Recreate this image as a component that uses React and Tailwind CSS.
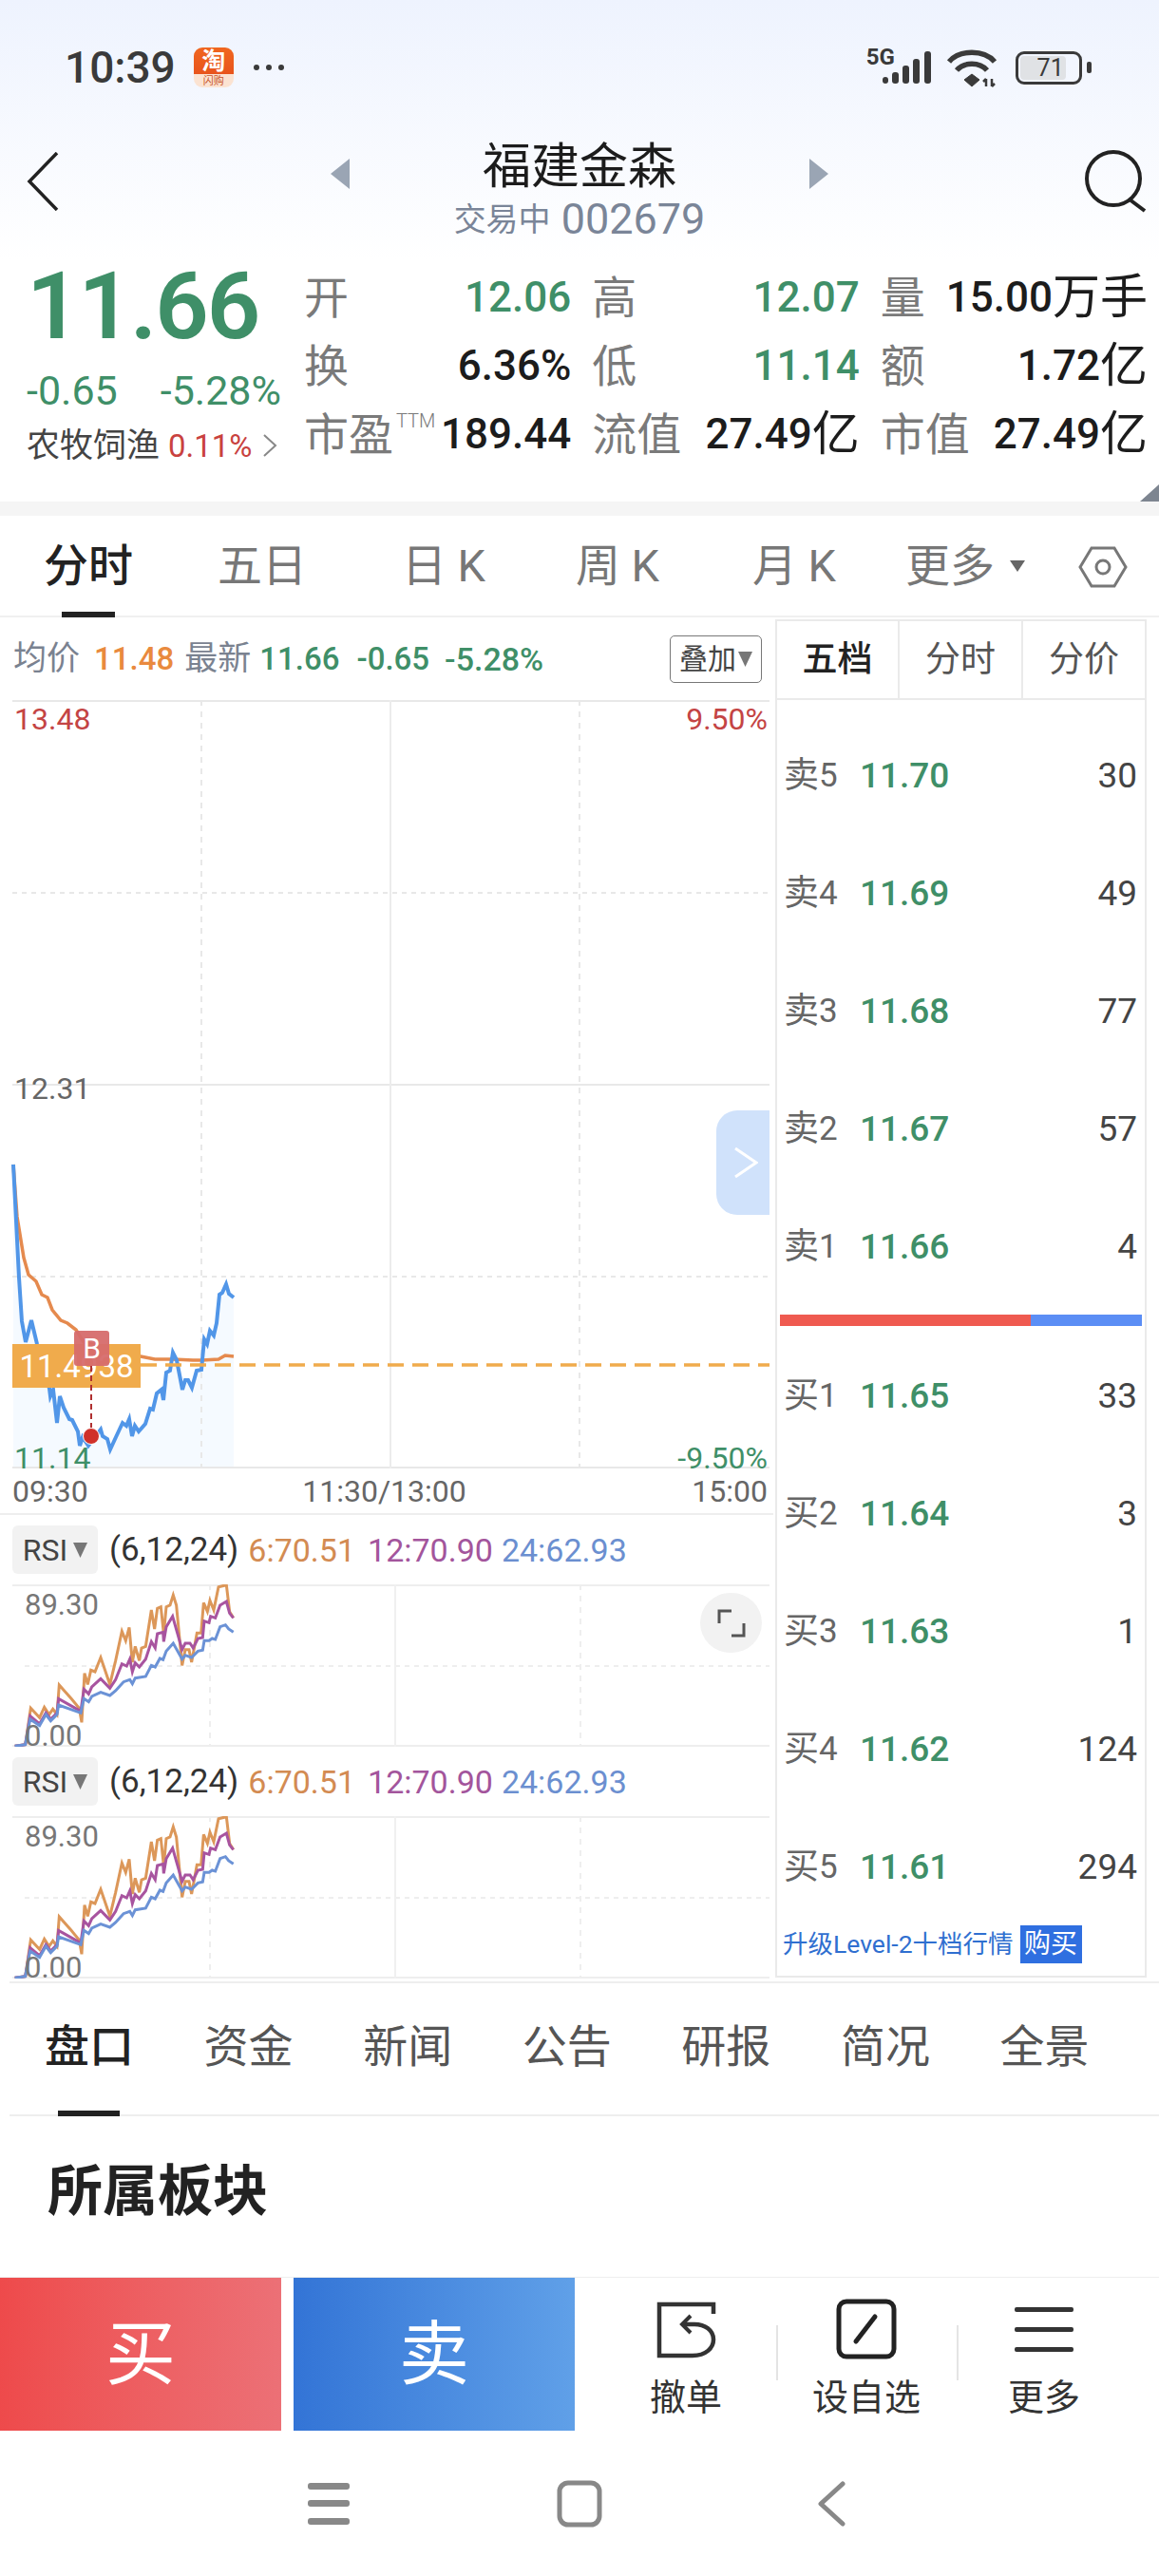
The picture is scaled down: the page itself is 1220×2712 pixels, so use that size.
import React from "react";

const GREEN = "text-[#3f8f68]";

// price line, page coordinates
const PRICE = [[14,1226],[20,1345],[23,1391],[27,1413],[33,1390],[39,1415],[46,1440],[52,1462],[53,1470],[56,1463],[60,1498],[63,1470],[67,1482],[73,1494],[76,1495],[82,1507],[84,1522],[87,1513],[93,1522],[106,1505],[108,1512],[113,1515],[116,1526],[122,1513],[129,1498],[133,1501],[136,1494],[139,1512],[142,1501],[146,1507],[153,1499],[158,1483],[161,1484],[165,1467],[170,1463],[172,1474],[175,1445],[179,1443],[182,1424],[186,1432],[192,1463],[195,1453],[198,1453],[202,1461],[207,1443],[212,1442],[215,1410],[218,1415],[221,1401],[225,1406],[228,1393],[231,1363],[234,1361],[238,1352],[241,1362],[246,1366]];
const AVG = [[14,1226],[18,1281],[25,1324],[30,1342],[38,1349],[44,1363],[50,1366],[55,1379],[64,1390],[71,1393],[80,1400],[88,1413],[130,1424],[148,1428],[163,1431],[182,1431],[203,1432],[213,1432],[230,1431],[237,1427],[246,1428]];

// rsi lines, read at 3x from the first rsi chart, origin (0,1640)
const RSI_BLUE = [[47,595],[80,590],[95,510],[125,530],[145,495],[160,515],[180,495],[185,465],[255,490],[265,445],[280,455],[290,438],[318,425],[347,435],[365,420],[390,392],[410,385],[418,398],[427,380],[460,375],[478,340],[490,345],[505,318],[515,322],[525,295],[547,270],[575,320],[585,308],[605,315],[625,295],[640,292],[645,262],[660,262],[670,255],[680,258],[695,218],[712,212],[722,225],[737,235]];
const RSI_PURPLE = [[47,595],[80,590],[95,500],[125,525],[145,490],[160,510],[180,490],[185,445],[255,485],[265,415],[280,430],[290,408],[318,382],[347,412],[365,385],[385,335],[400,342],[410,320],[418,360],[427,332],[440,345],[460,320],[478,265],[490,285],[497,240],[515,235],[517,265],[525,218],[545,185],[575,290],[585,270],[600,270],[610,285],[625,255],[640,252],[645,200],[660,205],[665,185],[680,190],[695,150],[715,138],[725,175],[737,190]];
const RSI_ORANGE = [[47,595],[80,590],[97,475],[125,505],[140,472],[155,495],[167,478],[180,495],[187,402],[225,445],[250,475],[258,520],[267,365],[277,400],[287,355],[300,360],[318,315],[330,350],[347,400],[365,325],[385,232],[397,262],[408,220],[418,330],[427,280],[440,325],[447,285],[460,280],[478,165],[488,225],[497,160],[508,155],[517,240],[525,155],[537,150],[547,118],[557,150],[575,340],[585,290],[597,290],[605,330],[622,238],[635,238],[643,142],[655,170],[663,135],[675,165],[690,92],[715,86],[725,170],[737,190]];

const toPoints = (list) => list.map(([x, y]) => `${x},${y}`).join(" ");
const toRsiPoints = (list) => list.map(([x, y]) => `${x / 3},${1640 + y / 3}`).join(" ");

const STATS = [
  { label: "开", value: "12.06", color: GREEN },
  { label: "高", value: "12.07", color: GREEN },
  { label: "量", value: "15.00", unit: "万手", color: "text-[#1c1c1c]" },
  { label: "换", value: "6.36%", color: "text-[#1c1c1c]" },
  { label: "低", value: "11.14", color: GREEN },
  { label: "额", value: "1.72", unit: "亿", color: "text-[#1c1c1c]" },
  { label: "市盈", ttm: true, value: "189.44", color: "text-[#1c1c1c]" },
  { label: "流值", value: "27.49", unit: "亿", color: "text-[#1c1c1c]" },
  { label: "市值", value: "27.49", unit: "亿", color: "text-[#1c1c1c]" },
];

const CHART_TABS = [
  { name: "分时", w: "w-[186px]", active: true },
  { name: "五日", w: "w-[180px]" },
  { name: "日 K", w: "w-[202px]" },
  { name: "周 K", w: "w-[164px]" },
  { name: "月 K", w: "w-[208px]" },
];

const SELLS = [
  ["卖", "5", "11.70", "30"],
  ["卖", "4", "11.69", "49"],
  ["卖", "3", "11.68", "77"],
  ["卖", "2", "11.67", "57"],
  ["卖", "1", "11.66", "4"],
];
const BUYS = [
  ["买", "1", "11.65", "33"],
  ["买", "2", "11.64", "3"],
  ["买", "3", "11.63", "1"],
  ["买", "4", "11.62", "124"],
  ["买", "5", "11.61", "294"],
];

const INFO_TABS = ["资金", "新闻", "公告", "研报", "简况", "全景"];

function StatusBar() {
  return (
    <div className="flex h-[142px] items-center">
      <span className="ml-[68px] text-[46px] leading-none font-medium text-[#3a3a3a]">10:39</span>
      <div className="ml-[19px] flex h-[42px] w-[42px] flex-col overflow-hidden rounded-[9px]">
        <div className="flex h-[28px] items-center justify-center bg-linear-to-b from-[#f0661f] to-[#e8541c] text-[25px] leading-none font-bold text-white">淘</div>
        <div className="flex h-[14px] items-center justify-center bg-[#fbe3d2] text-[11px] leading-none text-[#c9552a]">闪购</div>
      </div>
      <div className="ml-[21px] flex gap-[7px]">
        <span className="h-[6px] w-[6px] rounded-full bg-[#3a3a3a]" />
        <span className="h-[6px] w-[6px] rounded-full bg-[#3a3a3a]" />
        <span className="h-[6px] w-[6px] rounded-full bg-[#3a3a3a]" />
      </div>

      <div className="relative ml-[613px] h-[40px] w-[70px]">
        <span className="absolute top-[-3px] left-0 text-[24px] leading-none font-bold text-[#3a3a3a]">5G</span>
        <svg className="absolute top-0 left-0" width="72" height="40" viewBox="0 0 72 40" fill="#3a3a3a">
          <rect x="17" y="30" width="6" height="7" rx="3" />
          <rect x="27" y="25" width="7" height="12" rx="3" />
          <rect x="38" y="18" width="7" height="19" rx="3" />
          <rect x="49" y="11" width="7" height="26" rx="3" />
          <rect x="61" y="3" width="7" height="34" rx="3" />
        </svg>
      </div>
      <svg className="ml-[14px]" width="56" height="42" viewBox="0 0 56 42" fill="none" stroke="#3a3a3a">
        <path d="M3 15 C14 2 40 2 51 15" strokeWidth="5.5" />
        <path d="M11 24 C19 15 35 15 43 24" strokeWidth="5.5" />
        <path d="M19 34 L27 28 L35 34 L27 41 Z" fill="#3a3a3a" strokeWidth="1" />
        <path d="M42 41 V33 M39 36 L42 33 M48 33 V41 M51 38 L48 41" strokeWidth="2.5" />
      </svg>
      <div className="ml-[17px] flex h-[35px] w-[70px] items-center rounded-[9px] border-[3px] border-[#3a3a3a] p-[2px]">
        <div className="flex h-full w-[48px] items-center justify-end rounded-[4px] bg-[#e0e2e5] pr-[2px] text-[25px] leading-none text-[#3a3a3a]">71</div>
      </div>
      <span className="ml-[5px] h-[12px] w-[5px] rounded-[2px] bg-[#3a3a3a]" />
    </div>
  );
}

function Header() {
  return (
    <div className="grid h-[123px] grid-cols-[1fr_auto_1fr] px-[12px]">
      <svg className="mt-[18px] ml-[16px]" width="36" height="62" viewBox="0 0 36 62" fill="none" stroke="#222" strokeWidth="3.5">
        <path d="M32 1 L3 31 L32 61" />
      </svg>
      <div className="flex w-[524px] justify-between">
        <svg className="mt-[25px]" width="20" height="32" viewBox="0 0 20 32" fill="#9aa5b4"><path d="M20 0 V32 L0 16 Z" /></svg>
        <div className="flex flex-col items-center">
          <span className="mt-[7px] text-[51px] leading-[54px] text-[#1c1c1c]">福建金森</span>
          <span className="mt-[5px] flex items-center gap-[11px] leading-none text-[#7a8598]">
            <span className="text-[34px]">交易中</span>
            <span className="text-[45px]">002679</span>
          </span>
        </div>
        <svg className="mt-[25px]" width="20" height="32" viewBox="0 0 20 32" fill="#9aa5b4"><path d="M0 0 V32 L20 16 Z" /></svg>
      </div>
      <svg className="mt-[16px] ml-auto" width="66" height="66" viewBox="0 0 66 66" fill="none" stroke="#222" strokeWidth="4">
        <ellipse cx="30" cy="30" rx="28" ry="28" />
        <path d="M47 52 L63 64" />
      </svg>
    </div>
  );
}

function Quote() {
  return (
    <div className="relative flex h-[263px]">
      <div className="w-[320px] pl-[28px]">
        <div className={`flex h-[114px] items-center text-[99px] leading-none font-semibold tracking-[-2px] ${GREEN}`}>11.66</div>
        <div className={`flex h-[64px] w-[268px] items-center justify-between text-[43px] leading-none ${GREEN}`}>
          <span>-0.65</span>
          <span>-5.28%</span>
        </div>
        <div className="flex h-[52px] items-center leading-none">
          <span className="text-[35px] text-[#444]">农牧饲渔</span>
          <span className="ml-[9px] text-[33px] text-[#c9423f]">0.11%</span>
          <svg className="ml-[10px]" width="16" height="26" viewBox="0 0 16 26" fill="none" stroke="#888" strokeWidth="2"><path d="M2 2 L14 13 L2 24" /></svg>
        </div>
      </div>
      <div className="mt-[12px] grid h-[216px] w-[888px] grid-cols-3 grid-rows-3 gap-x-[22px]">
        {STATS.map((item) => (
          <div key={item.label} className="flex items-center justify-between">
            <span className="relative text-[47px] leading-none text-[#7a7a7a]">
              {item.label}
              {item.ttm && <span className="absolute top-[-1px] left-[97px] text-[20px] leading-none font-light">TTM</span>}
            </span>
            <span className={`flex items-center text-[44px] leading-none font-medium ${item.color}`}>
              {item.value}
              {item.unit && <span className="text-[50px] font-normal">{item.unit}</span>}
            </span>
          </div>
        ))}
      </div>
      <svg className="absolute right-0 bottom-0" width="20" height="18" viewBox="0 0 20 18" fill="#7d8590"><path d="M20 0 V18 H0 Z" /></svg>
    </div>
  );
}

function ChartTabs() {
  return (
    <div className="flex h-[107px] border-b-2 border-[#f0f0f0] text-[#777]">
      {CHART_TABS.map((tab) => (
        <div key={tab.name} className={`relative flex items-center justify-center text-[47px] leading-none ${tab.w} ${tab.active ? "font-medium text-[#222]" : ""}`}>
          {tab.name}
          {tab.active && <span className="absolute bottom-[-2px] left-[65px] h-[6px] w-[56px] bg-[#222]" />}
        </div>
      ))}
      <div className="ml-[13px] flex w-[152px] items-center gap-[16px] text-[47px] leading-none">
        更多
        <svg width="16" height="12" viewBox="0 0 16 12" fill="#666"><path d="M0 0 H16 L8 12 Z" /></svg>
      </div>
      <svg className="mt-[32px] ml-[30px]" width="52" height="44" viewBox="0 0 52 44" fill="none" stroke="#777" strokeWidth="3">
        <path d="M14 2 H38 L50 22 L38 42 H14 L2 22 Z" />
        <circle cx="26" cy="22" r="7" />
      </svg>
    </div>
  );
}

function Caret({ className }) {
  return (
    <svg className={className} width="15" height="16" viewBox="0 0 15 16" fill="#777"><path d="M0 0 H15 L7.5 16 Z" /></svg>
  );
}

function InfoRow() {
  return (
    <div className="flex h-[87px] items-center pl-[14px] text-[33px] leading-none">
      <span className="text-[35px] text-[#7a8290]">均价</span>
      <span className="ml-[15px] font-medium text-[#e98a3e]">11.48</span>
      <span className="ml-[11px] text-[35px] text-[#7a8290]">最新</span>
      <span className={`ml-[9px] font-medium ${GREEN}`}>11.66</span>
      <span className={`ml-[18px] font-medium ${GREEN}`}>-0.65</span>
      <span className={`ml-[16px] text-[34px] font-medium ${GREEN}`}>-5.28%</span>
      <div className="ml-auto mr-[12px] flex h-[50px] w-[97px] items-center justify-center gap-[2px] rounded-[5px] border border-[#777] text-[30px] text-[#444]">
        叠加
        <Caret />
      </div>
    </div>
  );
}

function PriceChart() {
  return (
    <div className="relative h-[809px] w-[814px] text-[32px] leading-none">
      <svg className="block" width="814" height="809" viewBox="0 737 814 809">
        <polygon points={`${toPoints(PRICE)} 246,1546 14,1546`} fill="#f5faff" />
        <line x1="13" y1="738" x2="810" y2="738" stroke="#e8e8e8" strokeWidth="2" />
        <line x1="13" y1="1142" x2="810" y2="1142" stroke="#e8e8e8" strokeWidth="2" />
        <line x1="13" y1="1545" x2="810" y2="1545" stroke="#e8e8e8" strokeWidth="2" />
        <line x1="13" y1="940" x2="810" y2="940" stroke="#e8e8e8" strokeWidth="2" strokeDasharray="5 5" />
        <line x1="13" y1="1344" x2="810" y2="1344" stroke="#e8e8e8" strokeWidth="2" strokeDasharray="5 5" />
        <line x1="212" y1="737" x2="212" y2="1546" stroke="#e8e8e8" strokeWidth="2" strokeDasharray="6 6" />
        <line x1="411" y1="737" x2="411" y2="1546" stroke="#ececec" strokeWidth="2" />
        <line x1="610" y1="737" x2="610" y2="1546" stroke="#e8e8e8" strokeWidth="2" strokeDasharray="6 6" />
        <polyline points={toPoints(AVG)} fill="none" stroke="#e58a4e" strokeWidth="3.5" />
        <polyline points={toPoints(PRICE)} fill="none" stroke="#5196e8" strokeWidth="4" />
        <line x1="148" y1="1437" x2="810" y2="1437" stroke="#f0ab4c" strokeWidth="3.5" strokeDasharray="17 9" />
      </svg>

      <span className="absolute top-[4px] left-[15px] text-[#c44444]">13.48</span>
      <span className="absolute top-[4px] right-[6px] text-[#c44444]">9.50%</span>
      <span className="absolute top-[393px] left-[15px] text-[#666]">12.31</span>
      <span className={`absolute top-[782px] left-[15px] ${GREEN}`}>11.14</span>
      <span className={`absolute top-[782px] right-[6px] ${GREEN}`}>-9.50%</span>

      <div className="absolute top-[678px] left-[13px] flex h-[46px] w-[135px] items-center justify-center bg-[#f0ab4c] text-[33px] text-white">11.4938</div>
      <div className="absolute top-[664px] left-[78px] flex h-[37px] w-[37px] items-center justify-center rounded-[3px] bg-[#d66c6c]/95 text-[30px] text-white">B</div>
      <span className="absolute top-[701px] left-[95px] h-[66px] border-l-2 border-dashed border-[#b03030]" />
      <span className="absolute top-[766px] left-[87px] h-[18px] w-[18px] rounded-full border border-white bg-[#d0312a]" />

      <div className="absolute top-[432px] left-[754px] flex h-[110px] w-[56px] items-center justify-end rounded-l-[22px] bg-[#d0e2fb] pr-[12px]">
        <svg width="26" height="34" viewBox="0 0 26 34" fill="none" stroke="#fff" strokeWidth="3"><path d="M2 2 L24 17 L2 32" /></svg>
      </div>
    </div>
  );
}

function RsiRow() {
  return (
    <div className="flex h-[73px] items-center text-[34px] leading-none">
      <div className="ml-[13px] flex h-[51px] w-[90px] items-center justify-center gap-[6px] rounded-[6px] bg-[#f2f2f2] text-[32px] text-[#444]">
        RSI
        <Caret />
      </div>
      <span className="ml-[12px] text-[35px] text-[#333]">(6,12,24)</span>
      <span className="ml-[10px] text-[#d38b52]">6:70.51</span>
      <span className="ml-[13px] text-[#a3559c]">12:70.90</span>
      <span className="ml-[9px] text-[#6b8fd0]">24:62.93</span>
    </div>
  );
}

function RsiChart({ expand }) {
  return (
    <div className="relative h-[171px] w-[814px] text-[31px] leading-none text-[#777]">
      <svg className="block" width="814" height="171" viewBox="0 1668 814 171">
        <line x1="13" y1="1669" x2="810" y2="1669" stroke="#eeeeee" strokeWidth="2" />
        <line x1="13" y1="1838" x2="810" y2="1838" stroke="#eeeeee" strokeWidth="2" />
        <line x1="26" y1="1754" x2="810" y2="1754" stroke="#eeeeee" strokeWidth="2" strokeDasharray="5 5" />
        <line x1="221" y1="1668" x2="221" y2="1839" stroke="#eeeeee" strokeWidth="2" strokeDasharray="6 6" />
        <line x1="416" y1="1668" x2="416" y2="1839" stroke="#f0f0f0" strokeWidth="2" />
        <line x1="611" y1="1668" x2="611" y2="1839" stroke="#eeeeee" strokeWidth="2" strokeDasharray="6 6" />
        <polyline points={toRsiPoints(RSI_ORANGE)} fill="none" stroke="#dc9759" strokeWidth="3" />
        <polyline points={toRsiPoints(RSI_PURPLE)} fill="none" stroke="#a8549f" strokeWidth="3" />
        <polyline points={toRsiPoints(RSI_BLUE)} fill="none" stroke="#6b92d6" strokeWidth="3" />
      </svg>
      <span className="absolute top-[6px] left-[26px]">89.30</span>
      <span className="absolute top-[144px] left-[26px]">0.00</span>
      {expand && (
        <div className="absolute top-[9px] left-[737px] flex h-[63px] w-[65px] items-center justify-center rounded-full bg-[#f2f2f2]">
          <svg width="30" height="30" viewBox="0 0 30 30" fill="none" stroke="#555" strokeWidth="3">
            <path d="M2 15 V2 H15 M28 15 V28 H15" />
          </svg>
        </div>
      )}
    </div>
  );
}

function OrderRow({ row }) {
  return (
    <div className="flex h-[124px] items-center pr-[8px] pl-[7px] leading-none">
      <span className="flex w-[80px] items-center text-[#666]">
        <span className="text-[37px]">{row[0]}</span>
        <span className="text-[35px]">{row[1]}</span>
      </span>
      <span className={`text-[37px] font-medium ${GREEN}`}>{row[2]}</span>
      <span className="ml-auto text-[37px] text-[#444]">{row[3]}</span>
    </div>
  );
}

function OrderBook() {
  return (
    <div className="mt-[2px] ml-[2px] h-[1430px] w-[391px] border-2 border-[#eaeaea]">
      <div className="flex h-[83px] items-center border-b-2 border-[#eaeaea] text-[37px] leading-none text-[#555]">
        <div className="flex h-full w-[129px] items-center justify-center border-r-2 border-[#eaeaea] font-medium text-[#222]">五档</div>
        <div className="flex h-full w-[130px] items-center justify-center border-r-2 border-[#eaeaea]">分时</div>
        <div className="flex h-full flex-1 items-center justify-center">分价</div>
      </div>
      <div className="pt-[17px]">
        {SELLS.map((row) => <OrderRow key={row[1]} row={row} />)}
      </div>
      <div className="mx-[3px] mt-[10px] flex h-[12px]">
        <div className="w-[264px] bg-[#ef5a50]" />
        <div className="flex-1 bg-[#5b8ef5]" />
      </div>
      <div className="mt-[11px]">
        {BUYS.map((row) => <OrderRow key={row[1]} row={row} />)}
      </div>
      <div className="flex h-[40px] items-center pl-[6px]">
        <span className="text-[26.5px] leading-none whitespace-nowrap text-[#2f6fd0]">升级Level-2十档行情</span>
        <span className="ml-[7px] flex h-[40px] w-[65px] items-center justify-center bg-[#2f6fe0] text-[28px] leading-none text-white">购买</span>
      </div>
    </div>
  );
}

function InfoTabs() {
  return (
    <div className="relative ml-[10px] flex h-[142px] items-start border-y-2 border-[#eeeeee] pt-[44px] pl-[37px] text-[47px] leading-[46px] text-[#555]">
      <span className="w-[168px] font-medium text-[#222]">盘口</span>
      {INFO_TABS.map((tab) => (
        <span key={tab} className="w-[168px]">{tab}</span>
      ))}
      <span className="absolute bottom-[-2px] left-[51px] h-[6px] w-[65px] bg-[#222]" />
    </div>
  );
}

function ActionBar() {
  return (
    <div className="flex h-[162px] border-t border-[#eeeeee]">
      <div className="flex w-[296px] items-center justify-center bg-linear-to-r from-[#ee4a4b] to-[#ec7076] text-[74px] leading-none text-white">买</div>
      <div className="ml-[13px] flex w-[296px] items-center justify-center bg-linear-to-r from-[#3374d6] to-[#60a0e8] text-[74px] leading-none text-white">卖</div>
      <div className="ml-[42px] flex">
        <div className="flex w-[150px] flex-col items-center pt-[22px] text-[38px] leading-[40px] text-[#333]">
          <svg width="66" height="64" viewBox="0 0 66 64" fill="none" stroke="#333" strokeWidth="4.5">
            <path d="M62 16 V6 H5 V60 H40 C54 60 62 52 62 43 C62 33 53 27 42 27 H30" />
            <path d="M38 18 L29 27 L38 36" strokeWidth="4" />
          </svg>
          <span className="mt-[20px]">撤单</span>
        </div>
        <span className="mt-[50px] mr-[18px] ml-[20px] h-[58px] w-[2px] bg-[#e4e4e4]" />
        <div className="flex w-[150px] flex-col items-center pt-[22px] text-[38px] leading-[40px] text-[#333]">
          <svg width="66" height="64" viewBox="0 0 66 64" fill="none" stroke="#222" strokeWidth="5">
            <rect x="4" y="3" width="58" height="58" rx="8" />
            <path d="M22 45 L42 19" strokeLinecap="round" />
          </svg>
          <span className="mt-[20px]">设自选</span>
        </div>
        <span className="mt-[50px] mr-[15px] ml-[20px] h-[58px] w-[2px] bg-[#e4e4e4]" />
        <div className="flex w-[150px] flex-col items-center pt-[22px] text-[38px] leading-[40px] text-[#333]">
          <svg width="66" height="64" viewBox="0 0 66 64" fill="#333">
            <rect x="2" y="9" width="62" height="5" rx="2" />
            <rect x="2" y="30" width="62" height="5" rx="2" />
            <rect x="2" y="51" width="62" height="5" rx="2" />
          </svg>
          <span className="mt-[20px]">更多</span>
        </div>
      </div>
    </div>
  );
}

function NavBar() {
  return (
    <div className="flex h-[153px] items-center">
      <svg className="ml-[323px]" width="46" height="44" viewBox="0 0 46 44" fill="#888">
        <rect x="1" y="0" width="44" height="7" rx="3" />
        <rect x="1" y="18" width="44" height="7" rx="3" />
        <rect x="1" y="37" width="44" height="7" rx="3" />
      </svg>
      <svg className="ml-[217px]" width="48" height="50" viewBox="0 0 48 50" fill="none" stroke="#888" strokeWidth="5">
        <rect x="3" y="3" width="42" height="44" rx="9" />
      </svg>
      <svg className="ml-[226px]" width="30" height="48" viewBox="0 0 30 48" fill="none" stroke="#888" strokeWidth="5" strokeLinecap="round" strokeLinejoin="round">
        <path d="M27 3 L4 24 L27 45" />
      </svg>
    </div>
  );
}

export default function App() {
  return (
    <div className="flex h-[2712px] w-[1220px] flex-col overflow-hidden bg-white font-['Roboto','Noto_Sans_CJK_SC',sans-serif]">
      <div className="bg-linear-to-b from-[#eef3fe] to-white to-[52%]">
        <StatusBar />
        <Header />
        <Quote />
      </div>
      <div className="h-[15px] bg-[#f5f5f5]" />
      <ChartTabs />

      <div className="flex h-[1436px]">
        <div className="w-[814px]">
          <InfoRow />
          <PriceChart />
          <div className="flex h-[47px] items-center justify-between pr-[6px] pl-[13px] text-[32px] leading-none text-[#666]">
            <span>09:30</span>
            <span className="mr-[12px]">11:30/13:00</span>
            <span>15:00</span>
          </div>
          <div className="border-t-2 border-[#eeeeee]">
            <RsiRow />
          </div>
          <RsiChart expand />
          <RsiRow />
          <RsiChart />
        </div>
        <OrderBook />
      </div>

      <InfoTabs />
      <div className="h-[169px] pt-[50px] pl-[50px] text-[58px] leading-[58px] font-bold text-[#222]">所属板块</div>
      <ActionBar />
      <NavBar />
    </div>
  );
}
